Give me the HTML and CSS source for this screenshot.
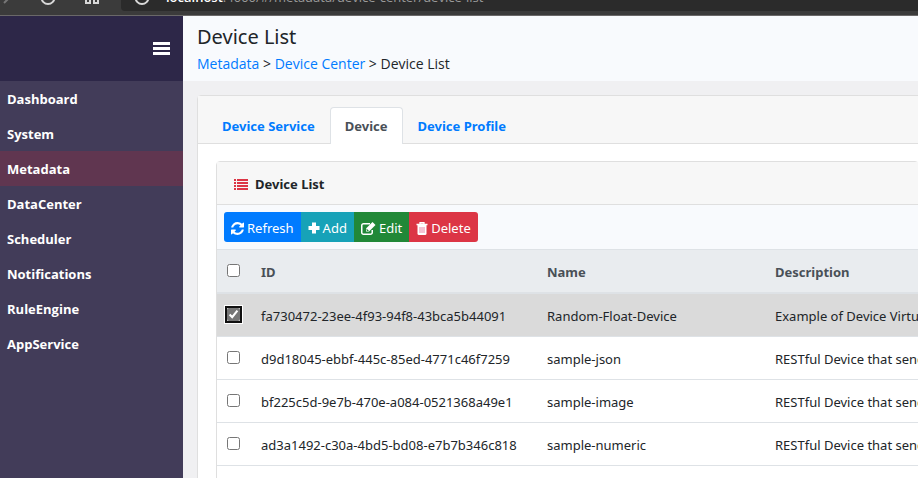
FILE: index.html
```html
<!DOCTYPE html>
<html lang="en">
<head>
<meta charset="utf-8">
<title>Device List</title>
<link rel="stylesheet" href="styles.css">
</head>
<body>
<div class="chrome">
  <svg class="chrome-icon" width="16" height="16" viewBox="0 0 16 16"><path d="M13 8L8 13" stroke="#777"/></svg>
  <svg class="chrome-icon" width="16" height="16" viewBox="0 0 16 16"><circle cx="8" cy="7.500" r="6.500"/></svg>
  <svg class="chrome-icon" width="16" height="16" viewBox="0 0 16 16"><rect x="2" y="2" width="4" height="4"/><rect x="10" y="2" width="4" height="4"/><rect x="2" y="9" width="4" height="4"/><rect x="10" y="9" width="4" height="4"/></svg>
  <div class="address">
    <svg class="chrome-icon" width="16" height="16" viewBox="0 0 16 16"><circle cx="8" cy="7.500" r="6.500"/></svg>
    <span class="url"><b>localhost</b>:4000/#/metadata/device-center/device-list</span>
  </div>
</div>
<div class="app">
  <aside class="sidebar">
    <div class="brand">
      <button class="menu-toggle" type="button" aria-label="Toggle menu">
        <svg width="17" height="15" viewBox="0 0 17 15"><path d="M0 1h17v3H0zM0 6h17v3H0zM0 11h17v3H0z" fill="#fff"/></svg>
      </button>
    </div>
    <nav class="menu">
      <a href="#">Dashboard</a>
      <a href="#">System</a>
      <a href="#" class="active">Metadata</a>
      <a href="#">DataCenter</a>
      <a href="#">Scheduler</a>
      <a href="#">Notifications</a>
      <a href="#">RuleEngine</a>
      <a href="#">AppService</a>
    </nav>
  </aside>
  <main class="main">
    <header class="page-head">
      <h1>Device List</h1>
      <nav class="crumbs"><a href="#">Metadata</a> &gt; <a href="#">Device Center</a> &gt; <span>Device List</span></nav>
    </header>
    <section class="card outer">
      <nav class="tabs">
        <a href="#">Device Service</a>
        <a href="#" class="current">Device</a>
        <a href="#">Device Profile</a>
      </nav>
      <div class="card inner">
        <h2 class="card-title">
          <svg width="14" height="11" viewBox="0 0 14 11"><path d="M0 0h2v2H0zM3 0h11v2H3zM0 3h2v2H0zM3 3h11v2H3zM0 6h2v2H0zM3 6h11v2H3zM0 9h2v2H0zM3 9h11v2H3z" fill="#dc3545"/></svg>
          Device List
        </h2>
        <div class="toolbar">
          <button type="button" class="btn refresh"><svg width="13" height="13" viewBox="0 0 1536 1536"><path fill="#fff" d="M1511 928q0 5-1 7-64 268-268 434.500T764 1536q-146 0-282.500-55T238 1324l-129 129q-19 19-45 19t-45-19-19-45V960q0-26 19-45t45-19h448q26 0 45 19t19 45-19 45l-137 137q71 66 161 102t187 36q134 0 250-65t186-179q11-17 53-117 8-23 30-23h192q13 0 22.500 9.500t9.500 22.500zm25-800v448q0 26-19 45t-45 19h-448q-26 0-45-19t-19-45 19-45l138-138Q969 256 768 256q-134 0-250 65T332 500q-11 17-53 117-8 23-30 23H50q-13 0-22.500-9.500T18 608v-7q65-268 270-434.500T768 0q146 0 284 55.500T1297 212l130-129q19-19 45-19t45 19 19 45z"/></svg>Refresh</button>
          <button type="button" class="btn add"><svg width="12" height="12" viewBox="0 0 12 12"><path d="M4 .500h4V4h3.500v4H8v3.500H4V8H.500V4H4z" fill="#fff"/></svg>Add</button>
          <button type="button" class="btn edit"><svg width="15" height="13" viewBox="0 0 15 13"><path d="M11.250 8v2.500a1.750 1.750 0 0 1-1.750 1.750h-7A1.750 1.750 0 0 1 .750 10.500v-7A1.750 1.750 0 0 1 2.500 1.750H9" fill="none" stroke="#fff" stroke-width="1.500"/><path d="M5 6.500L11.500 0l3 3L8 9.500H5z" fill="#fff"/><path d="M6 7v1.500h1.500" fill="none" stroke="#218838"/></svg>Edit</button>
          <button type="button" class="btn delete"><svg width="12" height="13" viewBox="0 0 12 13"><path d="M4 2V.750h4V2M.500 2.500h11" fill="none" stroke="#fff" stroke-width="1.300"/><path d="M1.500 3h9v8.500a1.500 1.500 0 0 1-1.500 1.500H3a1.500 1.500 0 0 1-1.500-1.500z" fill="#fff"/><path d="M4 5v6M6 5v6M8 5v6" stroke="#ea86a8"/></svg>Delete</button>
        </div>
        <table class="devices">
          <colgroup><col class="c-check"><col class="c-id"><col class="c-name"><col></colgroup>
          <thead>
            <tr><th><input type="checkbox" aria-label="Select all"></th><th>ID</th><th>Name</th><th>Description</th></tr>
          </thead>
          <tbody>
            <tr class="selected"><td><input type="checkbox" checked aria-label="Select Random-Float-Device"></td><td>fa730472-23ee-4f93-94f8-43bca5b44091</td><td>Random-Float-Device</td><td>Example of Device Virtual</td></tr>
            <tr><td><input type="checkbox" aria-label="Select sample-json"></td><td>d9d18045-ebbf-445c-85ed-4771c46f7259</td><td>sample-json</td><td>RESTful Device that sends</td></tr>
            <tr><td><input type="checkbox" aria-label="Select sample-image"></td><td>bf225c5d-9e7b-470e-a084-0521368a49e1</td><td>sample-image</td><td>RESTful Device that sends</td></tr>
            <tr><td><input type="checkbox" aria-label="Select sample-numeric"></td><td>ad3a1492-c30a-4bd5-bd08-e7b7b346c818</td><td>sample-numeric</td><td>RESTful Device that sends</td></tr>
          </tbody>
        </table>
        <div class="card-foot"></div>
      </div>
    </section>
  </main>
</div>
</body>
</html>
```
FILE: styles.css
```css
* { box-sizing: border-box; }
html, body { height: 100%; }
body {
  margin: 0;
  display: flex;
  flex-direction: column;
  overflow: hidden;
  background: #f0f0f2;
  color: #212529;
  font: 13px/20px "Noto Sans", "Open Sans", sans-serif;
}
a { color: #007bff; text-decoration: none; }
svg { flex: none; }

.chrome {
  flex: none;
  display: flex;
  align-items: flex-end;
  gap: 28px;
  height: 16px;
  overflow: hidden;
  background: #3b3b3b;
  border-bottom: 1px solid #6a6868;
}
.chrome-icon { fill: none; stroke: #d8d8d8; stroke-width: 2; margin-bottom: 9px; }
.chrome > .chrome-icon:first-child { margin-left: -4px; }
.address {
  flex: 1;
  display: flex;
  align-items: flex-end;
  gap: 16px;
  height: 30px;
  margin: 0 0 4px -7px;
  padding-left: 13px;
  border-radius: 0 0 0 4px;
  background: #2b2b2b;
}
.address .chrome-icon { margin-bottom: 5px; }
.url { line-height: 20px; margin-bottom: 4px; color: #9a9a9a; font-family: "Open Sans", sans-serif; }
.url b { font-weight: 600; color: #fff; }

.app { flex: 1; display: flex; min-height: 0; }
.sidebar { flex: none; width: 183px; background: #423c59; }
.brand {
  display: flex;
  align-items: center;
  justify-content: flex-end;
  height: 65px;
  padding-right: 13px;
  background: #2d2748;
}
.menu-toggle { display: flex; padding: 0; border: 0; background: none; }
.menu a {
  display: block;
  padding: 8px 7px 7px;
  color: #fff;
  font-family: "Open Sans", sans-serif;
  font-weight: 700;
}
.menu a.active { background: #603650; }

.main { flex: 1; min-width: 0; overflow: hidden; }
.page-head { height: 65px; padding: 8px 14px; background: #f8fafd; }
h1 { margin: 0; font-size: 20px; line-height: 26px; font-weight: 400; }
.crumbs { margin-top: 4px; font-family: "Open Sans", sans-serif; font-size: 14px; white-space: pre; }

.card { border: 1px solid #dfdfdf; border-radius: 4px; background: #fff; }
.outer { margin: 14px; margin-right: -20px; }
.tabs {
  display: flex;
  padding: 11px 9px 0;
  background: #f7f7f7;
  border-bottom: 1px solid #dfdfdf;
}
.tabs a {
  margin-bottom: -1px;
  padding: 8px 14px;
  border: 1px solid transparent;
  border-bottom: 0;
  border-radius: 4px 4px 0 0;
  font-weight: 700;
}
.tabs a.current { color: #495057; background: #fff; border-color: #dee2e6; }

.inner { margin: 17px 18px; }
.card-title {
  display: flex;
  align-items: center;
  gap: 7px;
  margin: 0;
  padding: 12px 17px 10px;
  font-size: 13px;
  line-height: 20px;
  font-weight: 700;
  background: #f7f7f7;
  border-bottom: 1px solid #dfdfdf;
}
.toolbar { display: flex; padding: 7px; background: #f8fafd; }
.btn {
  display: flex;
  align-items: center;
  gap: 3px;
  height: 30px;
  padding: 2px 7px 0;
  border: 0;
  color: #fff;
  font: 13px/20px "Noto Sans", "Open Sans", sans-serif;
}
.refresh { background: #007bff; border-radius: 3px 0 0 3px; }
.add { background: #17a2b8; }
.edit { background: #218838; }
.delete { background: #dc3545; border-radius: 0 3px 3px 0; }

.devices {
  width: 100%;
  table-layout: fixed;
  border-collapse: separate;
  border-spacing: 0;
}
.c-check { width: 32px; }
.c-id { width: 286px; }
.c-name { width: 228px; }
th, td {
  height: 43px;
  padding: 2px 12px 0;
  border-top: 1px solid #dee2e6;
  text-align: left;
  white-space: nowrap;
}
th {
  height: 45px;
  font-weight: 700;
  color: #495057;
  background: #e9ecef;
  border-bottom: 2px solid #dee2e6;
}
th:first-child, td:first-child { padding: 0 0 0 10px; }
.devices input { display: block; width: 13px; height: 13px; margin: 0 0 2px; accent-color: #767676; }
.selected td { background: #dadada; border-top: 0; height: 42px; }
.selected input { border-radius: 2px; box-shadow: 0 0 0 2px #101010, 0 0 0 3px #fff; }
.card-foot { height: 43px; border-top: 1px solid #dee2e6; }
```
